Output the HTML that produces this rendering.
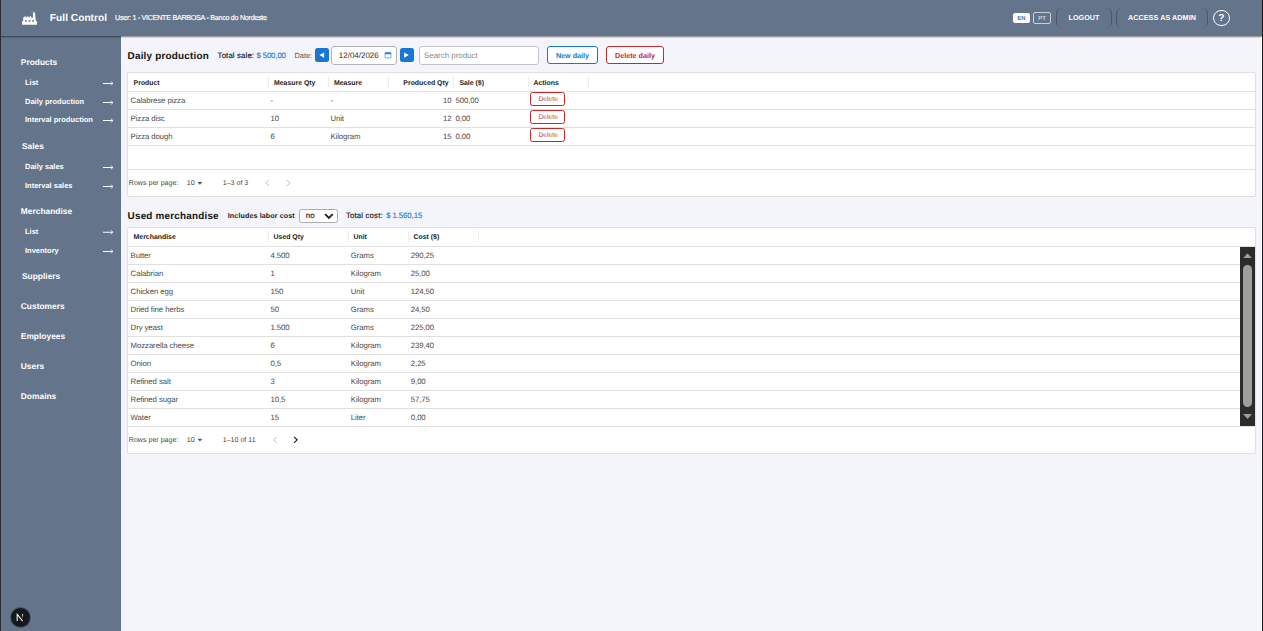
<!DOCTYPE html>
<html><head><meta charset="utf-8"><title>Full Control</title>
<style>
*{box-sizing:border-box;margin:0;padding:0}
html,body{width:1263px;height:631px;overflow:hidden;background:#f4f5fb}
body{font-family:"Liberation Sans",sans-serif;position:relative;color:#222;text-rendering:geometricPrecision}
.abs{position:absolute}
#bx{position:absolute;left:0;top:0;width:1263px;height:631px;overflow:hidden}
#page{position:absolute;left:1px;top:0;width:2102px;height:1052px;transform:scale(.6);transform-origin:0 0;overflow:hidden;z-index:20}
.t{position:absolute;white-space:nowrap}
.w{color:#fff}
.b{font-weight:bold}
.blue{color:#1976d2}
</style></head><body>
<div id="bx">
<div class="abs" style="left:0px;top:0px;width:1263px;height:36px;background:#64748b;box-shadow:0 1px 1.5px rgba(0,0,0,.48);z-index:3"></div>
<div class="abs" style="left:0px;top:36px;width:121px;height:595px;background:#64748b;z-index:2"></div>
<div class="abs" style="left:1013px;top:13px;width:17px;height:10px;background:#fff;border-radius:2px;z-index:4"></div>
<div class="abs" style="left:1033px;top:12px;width:18px;height:12px;border:1px solid #c9d0da;border-radius:2px;z-index:4"></div>
<div class="abs" style="left:1055.5px;top:8px;width:56px;height:20px;border-left:1px solid rgba(40,50,65,.45);border-right:1px solid rgba(40,50,65,.45);border-radius:6px;z-index:4"></div>
<div class="abs" style="left:1116px;top:8px;width:92px;height:20px;border-left:1px solid rgba(40,50,65,.45);border-right:1px solid rgba(40,50,65,.45);border-radius:6px;z-index:4"></div>
<div class="abs" style="left:1213px;top:9.5px;width:16.8px;height:16.8px;border:1.200px solid #fff;border-radius:50%;z-index:4"></div>
<div class="abs" style="left:315px;top:48px;width:14px;height:14px;background:#1976d2;border-radius:2.500px"></div>
<div class="abs" style="left:331px;top:46px;width:66px;height:19px;background:#fff;border:1px solid #b4b4b4;border-radius:3px"></div>
<div class="abs" style="left:400px;top:48px;width:14px;height:14px;background:#1976d2;border-radius:2.500px"></div>
<div class="abs" style="left:419px;top:46px;width:120px;height:19px;background:#fff;border:1px solid #c4c4c4;border-radius:3px"></div>
<div class="abs" style="left:547px;top:46px;width:51px;height:18px;background:#fff;border:1px solid #1976d2;border-radius:3px"></div>
<div class="abs" style="left:606px;top:46px;width:58px;height:18px;background:#fff;border:1px solid #c62828;border-radius:3px"></div>
<div class="abs" style="left:127px;top:72px;width:1129px;height:124.6px;background:#e0e0e0;border-radius:2px"></div>
<div class="abs" style="left:128px;top:73px;width:1127px;height:122.6px;background:#fff;border-radius:1.500px"></div>
<div class="abs" style="left:128px;top:91px;width:1127px;height:1px;background:#e0e0e0"></div>
<div class="abs" style="left:128px;top:109px;width:1127px;height:1px;background:#e0e0e0"></div>
<div class="abs" style="left:128px;top:127px;width:1127px;height:1px;background:#e0e0e0"></div>
<div class="abs" style="left:128px;top:145px;width:1127px;height:1px;background:#e0e0e0"></div>
<div class="abs" style="left:128px;top:169px;width:1127px;height:1px;background:#e0e0e0"></div>
<div class="abs" style="left:530px;top:92px;width:35px;height:14px;background:#fff;border:1px solid #c62828;border-radius:2.500px"></div>
<div class="abs" style="left:530px;top:110px;width:35px;height:14px;background:#fff;border:1px solid #c62828;border-radius:2.500px"></div>
<div class="abs" style="left:530px;top:128px;width:35px;height:14px;background:#fff;border:1px solid #c62828;border-radius:2.500px"></div>
<div class="abs" style="left:299px;top:209px;width:38.7px;height:13.6px;background:#fff;border:1px solid #adadad;border-radius:2.500px"></div>
<div class="abs" style="left:127px;top:227px;width:1129px;height:227px;background:#e0e0e0;border-radius:2px"></div>
<div class="abs" style="left:128px;top:228px;width:1127px;height:225px;background:#fff;border-radius:1.500px"></div>
<div class="abs" style="left:128px;top:246px;width:1127px;height:1px;background:#e0e0e0"></div>
<div class="abs" style="left:128px;top:264px;width:1112px;height:1px;background:#e0e0e0"></div>
<div class="abs" style="left:128px;top:282px;width:1112px;height:1px;background:#e0e0e0"></div>
<div class="abs" style="left:128px;top:300px;width:1112px;height:1px;background:#e0e0e0"></div>
<div class="abs" style="left:128px;top:318px;width:1112px;height:1px;background:#e0e0e0"></div>
<div class="abs" style="left:128px;top:336px;width:1112px;height:1px;background:#e0e0e0"></div>
<div class="abs" style="left:128px;top:354px;width:1112px;height:1px;background:#e0e0e0"></div>
<div class="abs" style="left:128px;top:372px;width:1112px;height:1px;background:#e0e0e0"></div>
<div class="abs" style="left:128px;top:390px;width:1112px;height:1px;background:#e0e0e0"></div>
<div class="abs" style="left:128px;top:408px;width:1112px;height:1px;background:#e0e0e0"></div>
<div class="abs" style="left:128px;top:426px;width:1127px;height:1px;background:#e0e0e0"></div>
<div class="abs" style="left:1240px;top:247px;width:15px;height:179px;background:#2b2b2b"></div>
<div class="abs" style="left:1243px;top:265px;width:9.1px;height:142px;background:#9e9e9e;border-radius:4.550px"></div>
<div class="abs" style="left:10.5px;top:607.5px;width:19px;height:19px;background:#15181c;border-radius:50%;box-shadow:0 0 0 1px rgba(40,48,60,.45);z-index:4"></div>
<div class="abs" style="left:0px;top:0px;width:1px;height:631px;background:#2b2f35;z-index:9"></div>
<div class="abs" style="left:1262px;top:0px;width:1px;height:631px;background:#1c1c1c;z-index:9"></div>
<div class="abs" style="left:1261px;top:37px;width:1px;height:594px;background:#fff;z-index:8"></div>
<div class="abs" style="left:267.5px;top:76px;width:1.3px;height:12px;background:#efefef"></div>
<div class="abs" style="left:327.5px;top:76px;width:1.3px;height:12px;background:#efefef"></div>
<div class="abs" style="left:387.5px;top:76px;width:1.3px;height:12px;background:#efefef"></div>
<div class="abs" style="left:452.5px;top:76px;width:1.3px;height:12px;background:#efefef"></div>
<div class="abs" style="left:527.5px;top:76px;width:1.3px;height:12px;background:#efefef"></div>
<div class="abs" style="left:587.5px;top:76px;width:1.3px;height:12px;background:#efefef"></div>
<div class="abs" style="left:267.5px;top:231px;width:1.3px;height:12px;background:#efefef"></div>
<div class="abs" style="left:347.5px;top:231px;width:1.3px;height:12px;background:#efefef"></div>
<div class="abs" style="left:407.5px;top:231px;width:1.3px;height:12px;background:#efefef"></div>
<div class="abs" style="left:477.5px;top:231px;width:1.3px;height:12px;background:#efefef"></div>
</div>
<div id="page">
<svg class="abs" style="left:34.800px;top:18.300px" width="25.330" height="23.330" viewBox="0 0 15.200 14"><path fill="#fff" d="M0 10.500H1.200V7L3.600 4.900V6.900L6.400 4.900V6.900L9.200 4.900V6.900L10.800 7.300L11 1.800H13.100L13.500 7.500L14 10.500H15.200V14H0z"/><path d="M9.300 1.300Q10.300 0.200 11.700 0.700" stroke="#dfe4ea" stroke-width=".4" fill="none"/><g fill="#64748b"><rect x="3.100" y="9.300" width="1.700" height="1.600"/><rect x="6.650" y="9.300" width="1.700" height="1.600"/><rect x="10.200" y="9.300" width="1.900" height="1.600"/></g></svg>
<div class="t w b" style="left:81.4px;top:19.8px;font-size:17px;line-height:20px;">Full Control</div>
<div class="t w" style="left:190px;top:20.0px;font-size:12px;line-height:20px;letter-spacing:-.5px;-webkit-text-stroke:.3px #fff">User: 1 - VICENTE BARBOSA - Banco do Nordeste</div>
<div class="t b" style="left:1686.7px;width:28.3px;text-align:center;top:21.0px;font-size:10px;line-height:20px;color:#64748b">EN</div>
<div class="t b" style="left:1720.0px;width:30.0px;text-align:center;top:21.0px;font-size:10px;line-height:20px;color:#cfd5de">PT</div>
<div class="t w b" style="left:1758.3px;width:93.3px;text-align:center;top:19.5px;font-size:12px;line-height:20px;">LOGOUT</div>
<div class="t w b" style="left:1858.3px;width:153.3px;text-align:center;top:19.5px;font-size:12px;line-height:20px;letter-spacing:.1px">ACCESS AS ADMIN</div>
<div class="t w b" style="left:2020.0px;width:28.3px;text-align:center;top:20.3px;font-size:17px;line-height:20px;">?</div>
<div class="t w b" style="left:33px;top:93.3px;font-size:14px;line-height:20px;">Products</div>
<div class="t w b" style="left:35px;top:233.0px;font-size:14px;line-height:20px;">Sales</div>
<div class="t w b" style="left:33px;top:341.7px;font-size:14px;line-height:20px;">Merchandise</div>
<div class="t w b" style="left:35px;top:450.0px;font-size:14px;line-height:20px;">Suppliers</div>
<div class="t w b" style="left:33px;top:500.0px;font-size:14px;line-height:20px;">Customers</div>
<div class="t w b" style="left:33px;top:550.0px;font-size:14px;line-height:20px;">Employees</div>
<div class="t w b" style="left:33px;top:600.0px;font-size:14px;line-height:20px;">Users</div>
<div class="t w b" style="left:33px;top:650.0px;font-size:14px;line-height:20px;">Domains</div>
<div class="t w b" style="left:40px;top:126.7px;font-size:12.5px;line-height:20px;">List</div>
<svg class="abs" style="left:169.700px;top:132.4px" width="19" height="14" viewBox="0 0 19 14"><path d="M0 7h16.200" stroke="#fff" stroke-width="1.700" fill="none"/><path d="M13 3.900l3.700 3.100-3.700 3.100" stroke="#fff" stroke-width="1.300" fill="none"/></svg>
<div class="t w b" style="left:40px;top:160.0px;font-size:12.5px;line-height:20px;">Daily production</div>
<svg class="abs" style="left:169.700px;top:163.7px" width="19" height="14" viewBox="0 0 19 14"><path d="M0 7h16.200" stroke="#fff" stroke-width="1.700" fill="none"/><path d="M13 3.900l3.700 3.100-3.700 3.100" stroke="#fff" stroke-width="1.300" fill="none"/></svg>
<div class="t w b" style="left:40px;top:189.3px;font-size:12.5px;line-height:20px;">Interval production</div>
<svg class="abs" style="left:169.700px;top:194.2px" width="19" height="14" viewBox="0 0 19 14"><path d="M0 7h16.200" stroke="#fff" stroke-width="1.700" fill="none"/><path d="M13 3.900l3.700 3.100-3.700 3.100" stroke="#fff" stroke-width="1.300" fill="none"/></svg>
<div class="t w b" style="left:40px;top:267.5px;font-size:12.5px;line-height:20px;">Daily sales</div>
<svg class="abs" style="left:169.700px;top:272.0px" width="19" height="14" viewBox="0 0 19 14"><path d="M0 7h16.200" stroke="#fff" stroke-width="1.700" fill="none"/><path d="M13 3.900l3.700 3.100-3.700 3.100" stroke="#fff" stroke-width="1.300" fill="none"/></svg>
<div class="t w b" style="left:40px;top:299.3px;font-size:12.5px;line-height:20px;">Interval sales</div>
<svg class="abs" style="left:169.700px;top:304.2px" width="19" height="14" viewBox="0 0 19 14"><path d="M0 7h16.200" stroke="#fff" stroke-width="1.700" fill="none"/><path d="M13 3.900l3.700 3.100-3.700 3.100" stroke="#fff" stroke-width="1.300" fill="none"/></svg>
<div class="t w b" style="left:40px;top:376.0px;font-size:12.5px;line-height:20px;">List</div>
<svg class="abs" style="left:169.700px;top:380.3px" width="19" height="14" viewBox="0 0 19 14"><path d="M0 7h16.200" stroke="#fff" stroke-width="1.700" fill="none"/><path d="M13 3.900l3.700 3.100-3.700 3.100" stroke="#fff" stroke-width="1.300" fill="none"/></svg>
<div class="t w b" style="left:40px;top:407.5px;font-size:12.5px;line-height:20px;">Inventory</div>
<svg class="abs" style="left:169.700px;top:411.7px" width="19" height="14" viewBox="0 0 19 14"><path d="M0 7h16.200" stroke="#fff" stroke-width="1.700" fill="none"/><path d="M13 3.900l3.700 3.100-3.700 3.100" stroke="#fff" stroke-width="1.300" fill="none"/></svg>
<svg class="abs" style="left:25.0px;top:1021.7px" width="13.330" height="15" viewBox="0 0 8 9"><defs><linearGradient id="ng" x1="0" y1="0" x2="0" y2="1"><stop offset="0" stop-color="#fff"/><stop offset="1" stop-color="#fff" stop-opacity="0"/></linearGradient></defs><path d="M1.200 7.900V1L6.600 7.900" stroke="#f2f2f2" stroke-width="1.100" fill="none" stroke-linejoin="miter"/><path d="M6.500 1V5.800" stroke="url(#ng)" stroke-width="1.100" fill="none"/><rect x="5.950" y=".9" width="1.100" height="4.500" fill="url(#ng)"/></svg>
<div class="t b" style="left:211px;top:83.8px;font-size:16.5px;line-height:20px;color:#111;letter-spacing:.33px">Daily production</div>
<div class="t " style="left:361px;top:81.7px;font-size:13px;line-height:20px;color:#222;-webkit-text-stroke:.3px #222;letter-spacing:.22px">Total sale:</div>
<div class="t blue" style="left:425.7px;top:81.7px;font-size:13px;line-height:20px;letter-spacing:-.2px;-webkit-text-stroke:.2px #1976d2">$ 500,00</div>
<div class="t " style="left:489px;top:81.7px;font-size:12.5px;line-height:20px;color:#555">Date:</div>
<svg class="abs" style="left:0;top:0" width="2102" height="200" viewBox="0 0 2102 200"><polygon points="538.5,87.4 530.7,91.8 538.5,96.2" fill="#fff"/></svg>
<svg class="abs" style="left:0;top:0" width="2102" height="200" viewBox="0 0 2102 200"><polygon points="671.9,87.4 679.7,91.8 671.9,96.2" fill="#fff"/></svg>
<div class="t " style="left:563.0px;top:82.0px;font-size:13.3px;line-height:20px;color:#2a2a2a">12/04/2026</div>
<svg class="abs" style="left:638.7px;top:86.3px" width="12" height="11.500" viewBox="0 0 12 11.500"><rect x=".8" y="1.800" width="10.400" height="8.900" rx="1.600" fill="none" stroke="#3583da" stroke-width="1.400"/><rect x=".8" y="1.800" width="10.400" height="2.600" fill="#3583da"/><path d="M3.300 0v2.500M8.700 0v2.500" stroke="#3583da" stroke-width="1.300"/></svg>
<div class="t " style="left:705px;top:82.0px;font-size:13.2px;line-height:20px;color:#8a8a8a">Search product</div>
<div class="t b" style="left:910.0px;width:85.0px;text-align:center;top:81.7px;font-size:12px;line-height:20px;color:#1976d2">New daily</div>
<div class="t b" style="left:1008.3px;width:96.7px;text-align:center;top:81.7px;font-size:12px;line-height:20px;color:#c62828">Delete daily</div>
<div class="t b" style="left:221px;top:128.2px;font-size:11.5px;line-height:20px;color:#222">Product</div>
<div class="t b" style="left:455px;top:128.2px;font-size:11.5px;line-height:20px;color:#222">Measure Qty</div>
<div class="t b" style="left:555px;top:128.2px;font-size:11.5px;line-height:20px;color:#222">Measure</div>
<div class="t b" style="left:0px;top:128.2px;font-size:11.5px;line-height:20px;left:auto;right:1356px;color:#222">Produced Qty</div>
<div class="t b" style="left:764px;top:128.2px;font-size:11.5px;line-height:20px;color:#222">Sale ($)</div>
<div class="t b" style="left:887.5px;top:128.2px;font-size:11.5px;line-height:20px;color:#222">Actions</div>
<div class="t " style="left:216px;top:157.5px;font-size:13px;line-height:20px;color:#4a4a4a;letter-spacing:-.15px">Calabrese pizza</div>
<div class="t " style="left:449px;top:157.5px;font-size:13px;line-height:20px;color:#4a4a4a;letter-spacing:-.15px">-</div>
<div class="t " style="left:549px;top:157.5px;font-size:13px;line-height:20px;color:#4a4a4a;letter-spacing:-.15px">-</div>
<div class="t " style="left:0px;top:157.5px;font-size:13px;line-height:20px;left:auto;right:1351px;color:#4a4a4a;letter-spacing:-.15px">10</div>
<div class="t " style="left:757.5px;top:157.5px;font-size:13px;line-height:20px;color:#4a4a4a;letter-spacing:-.15px">500,00</div>
<div class="t " style="left:882.8px;width:58.3px;text-align:center;top:155.4px;font-size:11.2px;line-height:20px;color:#cc3a35">Delete</div>
<div class="t " style="left:216px;top:187.5px;font-size:13px;line-height:20px;color:#4a4a4a;letter-spacing:-.15px">Pizza disc</div>
<div class="t " style="left:449px;top:187.5px;font-size:13px;line-height:20px;color:#4a4a4a;letter-spacing:-.15px">10</div>
<div class="t " style="left:549px;top:187.5px;font-size:13px;line-height:20px;color:#4a4a4a;letter-spacing:-.15px">Unit</div>
<div class="t " style="left:0px;top:187.5px;font-size:13px;line-height:20px;left:auto;right:1351px;color:#4a4a4a;letter-spacing:-.15px">12</div>
<div class="t " style="left:757.5px;top:187.5px;font-size:13px;line-height:20px;color:#4a4a4a;letter-spacing:-.15px">0,00</div>
<div class="t " style="left:882.8px;width:58.3px;text-align:center;top:185.4px;font-size:11.2px;line-height:20px;color:#cc3a35">Delete</div>
<div class="t " style="left:216px;top:217.5px;font-size:13px;line-height:20px;color:#4a4a4a;letter-spacing:-.15px">Pizza dough</div>
<div class="t " style="left:449px;top:217.5px;font-size:13px;line-height:20px;color:#4a4a4a;letter-spacing:-.15px">6</div>
<div class="t " style="left:549px;top:217.5px;font-size:13px;line-height:20px;color:#4a4a4a;letter-spacing:-.15px">Kilogram</div>
<div class="t " style="left:0px;top:217.5px;font-size:13px;line-height:20px;left:auto;right:1351px;color:#4a4a4a;letter-spacing:-.15px">15</div>
<div class="t " style="left:757.5px;top:217.5px;font-size:13px;line-height:20px;color:#4a4a4a;letter-spacing:-.15px">0,00</div>
<div class="t " style="left:882.8px;width:58.3px;text-align:center;top:215.4px;font-size:11.2px;line-height:20px;color:#cc3a35">Delete</div>
<div class="t " style="left:213px;top:295.0px;font-size:11.8px;line-height:20px;color:#444">Rows per page:</div>
<div class="t " style="left:309.5px;top:295.0px;font-size:11.8px;line-height:20px;color:#444">10</div>
<svg class="abs" style="left:327.300px;top:303px" width="9" height="6" viewBox="0 0 9 6"><polygon points="0,0 9,0 4.500,5" fill="#555"/></svg>
<div class="t " style="left:369.5px;top:295.0px;font-size:11.8px;line-height:20px;color:#444">1–3 of 3</div>
<svg class="abs" style="left:440px;top:299px" width="8" height="12" viewBox="0 0 8 12"><path d="M6.500 1L1.500 6l5 5" stroke="#bdbdbd" stroke-width="1.600" fill="none"/></svg>
<svg class="abs" style="left:475px;top:299px" width="8" height="12" viewBox="0 0 8 12"><path d="M1.500 1l5 5-5 5" stroke="#bdbdbd" stroke-width="1.6" fill="none"/></svg>
<div class="t b" style="left:211px;top:350.3px;font-size:16.5px;line-height:20px;color:#111;letter-spacing:.33px">Used merchandise</div>
<div class="t b" style="left:378px;top:348.5px;font-size:12px;line-height:20px;color:#222;letter-spacing:.12px">Includes labor cost</div>
<div class="t " style="left:508px;top:349.5px;font-size:13px;line-height:20px;color:#111;-webkit-text-stroke:.25px #111">no</div>
<svg class="abs" style="left:538px;top:355px" width="17" height="11" viewBox="0 0 18 12"><path d="M2 2l7 7 7-7" stroke="#222" stroke-width="3.400" fill="none"/></svg>
<div class="t " style="left:575px;top:348.5px;font-size:13px;line-height:20px;color:#222;-webkit-text-stroke:.3px #222;letter-spacing:.25px">Total cost:</div>
<div class="t blue" style="left:642px;top:348.5px;font-size:13px;line-height:20px;letter-spacing:-.15px;-webkit-text-stroke:.2px #1976d2">$ 1.560,15</div>
<div class="t b" style="left:221px;top:384.5px;font-size:11.5px;line-height:20px;color:#222">Merchandise</div>
<div class="t b" style="left:454.3px;top:384.5px;font-size:11.5px;line-height:20px;color:#222">Used Qty</div>
<div class="t b" style="left:587.4px;top:384.5px;font-size:11.5px;line-height:20px;color:#222">Unit</div>
<div class="t b" style="left:687.5px;top:384.5px;font-size:11.5px;line-height:20px;color:#222">Cost ($)</div>
<div class="t " style="left:216px;top:415.5px;font-size:13px;line-height:20px;color:#4a4a4a;letter-spacing:-.15px">Butter</div>
<div class="t " style="left:449px;top:415.5px;font-size:13px;line-height:20px;color:#4a4a4a;letter-spacing:-.15px">4.500</div>
<div class="t " style="left:583px;top:415.5px;font-size:13px;line-height:20px;color:#4a4a4a;letter-spacing:-.15px">Grams</div>
<div class="t " style="left:683px;top:415.5px;font-size:13px;line-height:20px;color:#4a4a4a;letter-spacing:-.15px">290,25</div>
<div class="t " style="left:216px;top:445.5px;font-size:13px;line-height:20px;color:#4a4a4a;letter-spacing:-.15px">Calabrian</div>
<div class="t " style="left:449px;top:445.5px;font-size:13px;line-height:20px;color:#4a4a4a;letter-spacing:-.15px">1</div>
<div class="t " style="left:583px;top:445.5px;font-size:13px;line-height:20px;color:#4a4a4a;letter-spacing:-.15px">Kilogram</div>
<div class="t " style="left:683px;top:445.5px;font-size:13px;line-height:20px;color:#4a4a4a;letter-spacing:-.15px">25,00</div>
<div class="t " style="left:216px;top:475.5px;font-size:13px;line-height:20px;color:#4a4a4a;letter-spacing:-.15px">Chicken egg</div>
<div class="t " style="left:449px;top:475.5px;font-size:13px;line-height:20px;color:#4a4a4a;letter-spacing:-.15px">150</div>
<div class="t " style="left:583px;top:475.5px;font-size:13px;line-height:20px;color:#4a4a4a;letter-spacing:-.15px">Unit</div>
<div class="t " style="left:683px;top:475.5px;font-size:13px;line-height:20px;color:#4a4a4a;letter-spacing:-.15px">124,50</div>
<div class="t " style="left:216px;top:505.5px;font-size:13px;line-height:20px;color:#4a4a4a;letter-spacing:-.15px">Dried fine herbs</div>
<div class="t " style="left:449px;top:505.5px;font-size:13px;line-height:20px;color:#4a4a4a;letter-spacing:-.15px">50</div>
<div class="t " style="left:583px;top:505.5px;font-size:13px;line-height:20px;color:#4a4a4a;letter-spacing:-.15px">Grams</div>
<div class="t " style="left:683px;top:505.5px;font-size:13px;line-height:20px;color:#4a4a4a;letter-spacing:-.15px">24,50</div>
<div class="t " style="left:216px;top:535.5px;font-size:13px;line-height:20px;color:#4a4a4a;letter-spacing:-.15px">Dry yeast</div>
<div class="t " style="left:449px;top:535.5px;font-size:13px;line-height:20px;color:#4a4a4a;letter-spacing:-.15px">1.500</div>
<div class="t " style="left:583px;top:535.5px;font-size:13px;line-height:20px;color:#4a4a4a;letter-spacing:-.15px">Grams</div>
<div class="t " style="left:683px;top:535.5px;font-size:13px;line-height:20px;color:#4a4a4a;letter-spacing:-.15px">225,00</div>
<div class="t " style="left:216px;top:565.5px;font-size:13px;line-height:20px;color:#4a4a4a;letter-spacing:-.15px">Mozzarella cheese</div>
<div class="t " style="left:449px;top:565.5px;font-size:13px;line-height:20px;color:#4a4a4a;letter-spacing:-.15px">6</div>
<div class="t " style="left:583px;top:565.5px;font-size:13px;line-height:20px;color:#4a4a4a;letter-spacing:-.15px">Kilogram</div>
<div class="t " style="left:683px;top:565.5px;font-size:13px;line-height:20px;color:#4a4a4a;letter-spacing:-.15px">239,40</div>
<div class="t " style="left:216px;top:595.5px;font-size:13px;line-height:20px;color:#4a4a4a;letter-spacing:-.15px">Onion</div>
<div class="t " style="left:449px;top:595.5px;font-size:13px;line-height:20px;color:#4a4a4a;letter-spacing:-.15px">0,5</div>
<div class="t " style="left:583px;top:595.5px;font-size:13px;line-height:20px;color:#4a4a4a;letter-spacing:-.15px">Kilogram</div>
<div class="t " style="left:683px;top:595.5px;font-size:13px;line-height:20px;color:#4a4a4a;letter-spacing:-.15px">2,25</div>
<div class="t " style="left:216px;top:625.5px;font-size:13px;line-height:20px;color:#4a4a4a;letter-spacing:-.15px">Refined salt</div>
<div class="t " style="left:449px;top:625.5px;font-size:13px;line-height:20px;color:#4a4a4a;letter-spacing:-.15px">3</div>
<div class="t " style="left:583px;top:625.5px;font-size:13px;line-height:20px;color:#4a4a4a;letter-spacing:-.15px">Kilogram</div>
<div class="t " style="left:683px;top:625.5px;font-size:13px;line-height:20px;color:#4a4a4a;letter-spacing:-.15px">9,00</div>
<div class="t " style="left:216px;top:655.5px;font-size:13px;line-height:20px;color:#4a4a4a;letter-spacing:-.15px">Refined sugar</div>
<div class="t " style="left:449px;top:655.5px;font-size:13px;line-height:20px;color:#4a4a4a;letter-spacing:-.15px">10,5</div>
<div class="t " style="left:583px;top:655.5px;font-size:13px;line-height:20px;color:#4a4a4a;letter-spacing:-.15px">Kilogram</div>
<div class="t " style="left:683px;top:655.5px;font-size:13px;line-height:20px;color:#4a4a4a;letter-spacing:-.15px">57,75</div>
<div class="t " style="left:216px;top:685.5px;font-size:13px;line-height:20px;color:#4a4a4a;letter-spacing:-.15px">Water</div>
<div class="t " style="left:449px;top:685.5px;font-size:13px;line-height:20px;color:#4a4a4a;letter-spacing:-.15px">15</div>
<div class="t " style="left:583px;top:685.5px;font-size:13px;line-height:20px;color:#4a4a4a;letter-spacing:-.15px">Liter</div>
<div class="t " style="left:683px;top:685.5px;font-size:13px;line-height:20px;color:#4a4a4a;letter-spacing:-.15px">0,00</div>
<svg class="abs" style="left:2070px;top:422px" width="15.200" height="8.400" viewBox="0 0 16 9"><polygon points="8,0 16,9 0,9" fill="#9e9e9e"/></svg>
<svg class="abs" style="left:2070px;top:690px" width="15.200" height="8.400" viewBox="0 0 16 9"><polygon points="0,0 16,0 8,9" fill="#9e9e9e"/></svg>
<div class="t " style="left:213px;top:723.0px;font-size:11.8px;line-height:20px;color:#444">Rows per page:</div>
<div class="t " style="left:309.5px;top:723.0px;font-size:11.8px;line-height:20px;color:#444">10</div>
<svg class="abs" style="left:327.300px;top:731px" width="9" height="6" viewBox="0 0 9 6"><polygon points="0,0 9,0 4.500,5" fill="#555"/></svg>
<div class="t " style="left:369.5px;top:723.0px;font-size:11.8px;line-height:20px;color:#444">1–10 of 11</div>
<svg class="abs" style="left:453px;top:727px" width="8" height="12" viewBox="0 0 8 12"><path d="M6.500 1L1.500 6l5 5" stroke="#bdbdbd" stroke-width="1.600" fill="none"/></svg>
<svg class="abs" style="left:487px;top:727px" width="8" height="12" viewBox="0 0 8 12"><path d="M1.500 1l5 5-5 5" stroke="#222" stroke-width="2" fill="none"/></svg>
</div>
</body></html>
